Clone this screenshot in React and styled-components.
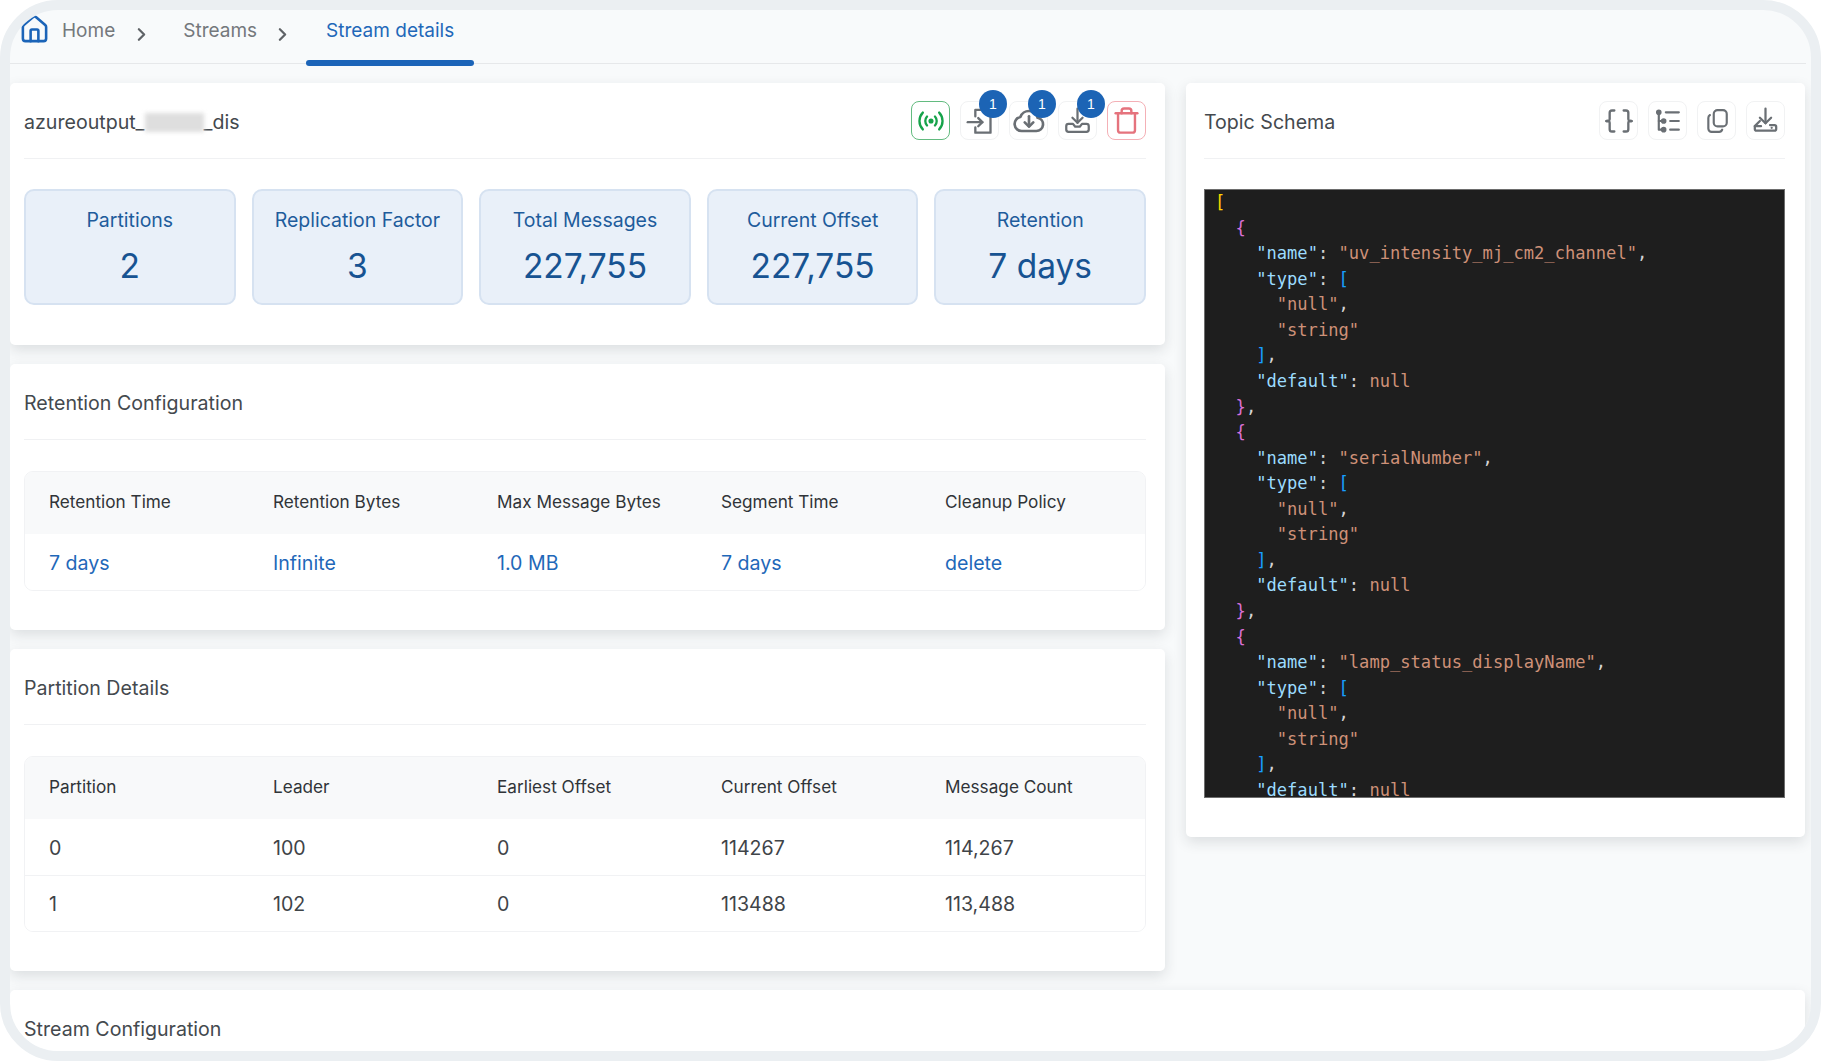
import React from 'react'
import styled, { createGlobalStyle } from 'styled-components'
import { ChevronRight, House, Trash } from 'lucide-react'

const GlobalStyle = createGlobalStyle`
  html, body {
    margin: 0;
    padding: 0;
    background: #ffffff;
  }
  * {
    box-sizing: border-box;
  }
`

const Frame = styled.div`
  width: 1821px;
  height: 1061px;
  border: 10px solid #ebeff2;
  border-radius: 58px;
  background: #f8fafb;
  overflow: hidden;
  font-family: 'Inter', sans-serif;
`

const TabBar = styled.nav`
  height: 54px;
  display: flex;
  align-items: center;
  padding-left: 9px;
  margin-right: 5px;
  border-bottom: 1px solid #e6e8ea;
  font-size: 19px;
`

const HomeIcon = styled(House)`
  width: 31px;
  height: 31px;
  color: #1b64b8;
  margin: -14px 12px 0 0;
`

const Crumb = styled.span`
  color: #74787c;
  margin-top: -13px;
`

const Separator = styled(ChevronRight)`
  width: 21px;
  height: 21px;
  color: #5f6367;
  margin: -4px ${(p) => p.$right}px 0 ${(p) => p.$left}px;
  stroke-width: 2.6;
`

const ActiveTab = styled.span`
  position: relative;
  height: 53px;
  padding: 0 20px 13px;
  display: flex;
  align-items: center;
  color: #1f68b9;

  &::after {
    content: '';
    position: absolute;
    left: 0;
    right: 0;
    bottom: -3px;
    height: 6px;
    border-radius: 3px;
    background: #1b64b8;
  }
`

const Content = styled.div`
  display: grid;
  grid-template-columns: 1155px 619px;
  gap: 19px 21px;
  padding: 19px 5px 0 0;
  align-items: start;
`

const LeftColumn = styled.div`
  display: flex;
  flex-direction: column;
  gap: 19px;
`

const Card = styled.section`
  background: #ffffff;
  border-radius: 5px;
  padding: 0 19px ${(p) => p.$bottom ?? 39}px 14px;
  box-shadow: 0 5px 14px rgba(30, 40, 50, 0.13);
`

const RightCard = styled(Card)`
  padding: 0 20px 39px 18px;
`

const WideCard = styled(Card)`
  grid-column: 1 / -1;
`

const CardHeader = styled.header`
  height: 76px;
  display: flex;
  align-items: center;
  justify-content: space-between;
  border-bottom: 1px solid #f0f1f3;
  margin-bottom: ${(p) => p.$gap ?? 30}px;
`

const CardTitle = styled.h2`
  margin: 0;
  padding-top: 2px;
  font-size: 19.6px;
  font-weight: 400;
  color: #44494e;
`

const BlurredText = styled.span`
  display: inline-block;
  width: 59px;
  height: 19px;
  vertical-align: -3px;
  background: #dedede;
  filter: blur(2px);
`

const ActionGroup = styled.div`
  display: flex;
  gap: 10px;
`

const ActionButton = styled.button`
  position: relative;
  width: 39px;
  height: 39px;
  padding: 0;
  display: flex;
  align-items: center;
  justify-content: center;
  background: #ffffff;
  border: 1.5px solid ${(p) => p.$border ?? '#f1f2f3'};
  border-radius: 8px;
  color: ${(p) => p.$color ?? '#6a6f74'};

  svg {
    flex: none;
    width: ${(p) => p.$icon ?? 26}px;
    height: ${(p) => p.$icon ?? 26}px;
  }
`

const Badge = styled.span`
  position: absolute;
  top: -12px;
  right: -9px;
  width: 28px;
  height: 28px;
  border-radius: 50%;
  background: #1c64b5;
  color: #ffffff;
  font-size: 14px;
  display: flex;
  align-items: center;
  justify-content: center;
`

const StatGrid = styled.div`
  display: grid;
  grid-template-columns: repeat(5, 1fr);
  gap: 16px;
`

const StatBox = styled.div`
  height: 116px;
  padding-top: 17px;
  background: #e9f0f9;
  border: 2px solid #d6e2f1;
  border-radius: 10px;
  text-align: center;
`

const StatLabel = styled.div`
  font-size: 19.5px;
  line-height: 24px;
  color: #1e5c9c;
`

const StatValue = styled.div`
  margin-top: 12px;
  font-size: 33.5px;
  line-height: 44px;
  color: #175392;
`

const Table = styled.div`
  border: 1px solid #f1f2f4;
  border-radius: 9px;
  overflow: hidden;
`

const TableRow = styled.div`
  display: grid;
  grid-template-columns: repeat(5, 1fr);
  align-items: center;
  height: ${(p) => p.$height}px;
  background: ${(p) => (p.$head ? '#f8f9fa' : '#ffffff')};
  border-top: ${(p) => (p.$divided ? '1px solid #f1f2f4' : 'none')};
`

const HeadCell = styled.div`
  padding: 0 0 3px 24px;
  font-size: 17.2px;
  color: #303438;
`

const BodyCell = styled.div`
  padding: 1px 0 0 24px;
  font-size: 19.6px;
  color: ${(p) => (p.$link ? '#1f68b9' : '#3f4448')};
`

const CodeBlock = styled.pre`
  margin: 0;
  height: 609px;
  padding: 0 10px;
  background: #1e1e1e;
  border: 1px solid #6d6d6d;
  overflow: hidden;
  font-family: 'DejaVu Sans Mono', monospace;
  font-size: 17.1px;
  line-height: 25.57px;
  color: #d4d4d4;
`

const Token = styled.span`
  color: ${(p) => p.$color};
`

// bracket pair colours and string colours, as vs code dark paints them
const TOKEN_COLORS = {
  key: '#9cdcfe',
  string: '#ce9178',
  outer: '#ffd700',
  object: '#da70d6',
  array: '#179fff',
}

const schemaField = (name) => [
  '  {',
  `    "name": "${name}",`,
  '    "type": [',
  '      "null",',
  '      "string"',
  '    ],',
  '    "default": null',
]

const SCHEMA_LINES = [
  '[',
  ...schemaField('uv_intensity_mj_cm2_channel'),
  '  },',
  ...schemaField('serialNumber'),
  '  },',
  ...schemaField('lamp_status_displayName'),
]

const tokenize = (line) =>
  line.split(/("[^"]*"(?=:)|"[^"]*"|null|[[\]{}])/).map((part, i) => {
    if (!part) return null
    let color
    if (part.startsWith('"')) {
      color = line.indexOf(`${part}:`) >= 0 ? TOKEN_COLORS.key : TOKEN_COLORS.string
    } else if (part === 'null') {
      color = TOKEN_COLORS.string
    } else if (part === '{' || part === '}') {
      color = TOKEN_COLORS.object
    } else if (part === '[' || part === ']') {
      color = line === '[' ? TOKEN_COLORS.outer : TOKEN_COLORS.array
    }
    return color ? (
      <Token key={i} $color={color}>
        {part}
      </Token>
    ) : (
      part
    )
  })

const STATS = [
  ['Partitions', '2'],
  ['Replication Factor', '3'],
  ['Total Messages', '227,755'],
  ['Current Offset', '227,755'],
  ['Retention', '7 days'],
]

const RETENTION_HEAD = ['Retention Time', 'Retention Bytes', 'Max Message Bytes', 'Segment Time', 'Cleanup Policy']
const RETENTION_ROW = ['7 days', 'Infinite', '1.0 MB', '7 days', 'delete']

const PARTITION_HEAD = ['Partition', 'Leader', 'Earliest Offset', 'Current Offset', 'Message Count']
const PARTITION_ROWS = [
  ['0', '100', '0', '114267', '114,267'],
  ['1', '102', '0', '113488', '113,488'],
]

const Svg = ({ children }) => (
  <svg
    viewBox="0 0 24 24"
    fill="none"
    stroke="currentColor"
    strokeWidth="2"
    strokeLinecap="round"
    strokeLinejoin="round"
  >
    {children}
  </svg>
)

const RadioIcon = () => (
  <Svg>
    <circle cx="12" cy="12" r="1.2" fill="currentColor" />
    <path d="M8.600 8.200a5.600 5.600 0 0 0 0 7.600" />
    <path d="M15.400 8.200a5.600 5.600 0 0 1 0 7.600" />
    <path d="M5 4.800a10.400 10.400 0 0 0 0 14.400" />
    <path d="M19 4.800a10.400 10.400 0 0 1 0 14.400" />
  </Svg>
)

const ImportIcon = () => (
  <Svg>
    <path d="M8 8V2.500h7.500L21 8v14H8v-4.500" />
    <path d="M1.500 13H14" />
    <path d="M10.500 9.500 14 13l-3.500 3.500" />
  </Svg>
)

const CloudDownIcon = () => (
  <Svg>
    <path d="M6.500 19.500h11a5 5 0 0 0 1-9.900 6.800 6.800 0 0 0-13-.6 5.300 5.300 0 0 0 1 10.500Z" />
    <path d="M12 8.500v7.500" />
    <path d="M8.800 13 12 16.200 15.200 13" />
  </Svg>
)

const TrayDownIcon = () => (
  <Svg>
    <path d="M12 1.500V14" />
    <path d="M7.500 9.500 12 14l4.500-4.500" />
    <path d="M4 15h4l2 2.500h4l2-2.500h4a2 2 0 0 1 2 2v3a2 2 0 0 1-2 2H4a2 2 0 0 1-2-2v-3a2 2 0 0 1 2-2Z" />
  </Svg>
)

const BracesIcon = () => (
  <Svg>
    <path d="M8 3H6a2 2 0 0 0-2 2v5a2 2 0 0 1-3 2 2 2 0 0 1 3 2v5a2 2 0 0 0 2 2h2" />
    <path d="M16 3h2a2 2 0 0 1 2 2v5a2 2 0 0 0 3 2 2 2 0 0 0-3 2v5a2 2 0 0 1-2 2h-2" />
  </Svg>
)

const TreeListIcon = () => (
  <Svg>
    <circle cx="3.500" cy="4" r="1.600" fill="currentColor" />
    <circle cx="8" cy="12" r="1.600" fill="currentColor" />
    <circle cx="8" cy="20" r="1.600" fill="currentColor" />
    <path d="M3.500 4v16H8" />
    <path d="M3.500 12H8" />
    <path d="M10 4h12" />
    <path d="M14 12h8" />
    <path d="M14 20h8" />
  </Svg>
)

const CopyIcon = () => (
  <Svg>
    <rect x="9" y="2" width="12" height="15" rx="3.500" />
    <path d="M5.500 6.500A3 3 0 0 0 4 9.200V19a3 3 0 0 0 3 3h7a3 3 0 0 0 2.800-2" />
  </Svg>
)

const DriveDownIcon = () => (
  <Svg>
    <path d="M12 1.500v13" />
    <path d="M7 9.500 12 14.500l5-5" />
    <path d="M7 12.500 2.500 17v2.500A1.500 1.500 0 0 0 4 21h16a1.500 1.500 0 0 0 1.500-1.500v-2a1.500 1.500 0 0 0-1.500-1.500h-4" />
    <path d="M2.500 17H8" />
    <path d="M17.500 18.500h.01" />
  </Svg>
)

const DataTable = ({ head, rows, headHeight, rowHeight, link }) => (
  <Table>
    <TableRow $head $height={headHeight}>
      {head.map((label) => (
        <HeadCell key={label}>{label}</HeadCell>
      ))}
    </TableRow>
    {rows.map((row, r) => (
      <TableRow key={r} $height={rowHeight} $divided={r > 0}>
        {row.map((value, c) => (
          <BodyCell key={c} $link={link}>
            {value}
          </BodyCell>
        ))}
      </TableRow>
    ))}
  </Table>
)

export default function App() {
  return (
    <>
      <GlobalStyle />
      <Frame>
        <TabBar>
          <HomeIcon strokeWidth={2} />
          <Crumb>Home</Crumb>
          <Separator $left={16} $right={31} />
          <Crumb>Streams</Crumb>
          <Separator $left={15} $right={13} />
          <ActiveTab>Stream details</ActiveTab>
        </TabBar>

        <Content>
          <LeftColumn>
            <Card $bottom={40}>
              <CardHeader>
                <CardTitle>
                  azureoutput_
                  <BlurredText />
                  _dis
                </CardTitle>
                <ActionGroup>
                  <ActionButton $border="#63bb80" $color="#16a34a" $icon={28}>
                    <RadioIcon />
                  </ActionButton>
                  <ActionButton $icon={28}>
                    <ImportIcon />
                    <Badge>1</Badge>
                  </ActionButton>
                  <ActionButton $icon={32}>
                    <CloudDownIcon />
                    <Badge>1</Badge>
                  </ActionButton>
                  <ActionButton $icon={27}>
                    <TrayDownIcon />
                    <Badge>1</Badge>
                  </ActionButton>
                  <ActionButton $border="#f4b0b6" $color="#e5737d" $icon={29}>
                    <Trash />
                  </ActionButton>
                </ActionGroup>
              </CardHeader>
              <StatGrid>
                {STATS.map(([label, value]) => (
                  <StatBox key={label}>
                    <StatLabel>{label}</StatLabel>
                    <StatValue>{value}</StatValue>
                  </StatBox>
                ))}
              </StatGrid>
            </Card>

            <Card>
              <CardHeader $gap={31}>
                <CardTitle>Retention Configuration</CardTitle>
              </CardHeader>
              <DataTable head={RETENTION_HEAD} rows={[RETENTION_ROW]} headHeight={62} rowHeight={56} link />
            </Card>

            <Card>
              <CardHeader $gap={31}>
                <CardTitle>Partition Details</CardTitle>
              </CardHeader>
              <DataTable head={PARTITION_HEAD} rows={PARTITION_ROWS} headHeight={62} rowHeight={56} />
            </Card>
          </LeftColumn>

          <RightCard>
            <CardHeader>
              <CardTitle>Topic Schema</CardTitle>
              <ActionGroup>
                <ActionButton $icon={28}>
                  <BracesIcon />
                </ActionButton>
                <ActionButton>
                  <TreeListIcon />
                </ActionButton>
                <ActionButton>
                  <CopyIcon />
                </ActionButton>
                <ActionButton $icon={27}>
                  <DriveDownIcon />
                </ActionButton>
              </ActionGroup>
            </CardHeader>
            <CodeBlock>
              {SCHEMA_LINES.map((line, i) => (
                <div key={i}>{tokenize(line)}</div>
              ))}
            </CodeBlock>
          </RightCard>

          <WideCard $bottom={60}>
            <CardHeader>
              <CardTitle>Stream Configuration</CardTitle>
            </CardHeader>
          </WideCard>
        </Content>
      </Frame>
    </>
  )
}
